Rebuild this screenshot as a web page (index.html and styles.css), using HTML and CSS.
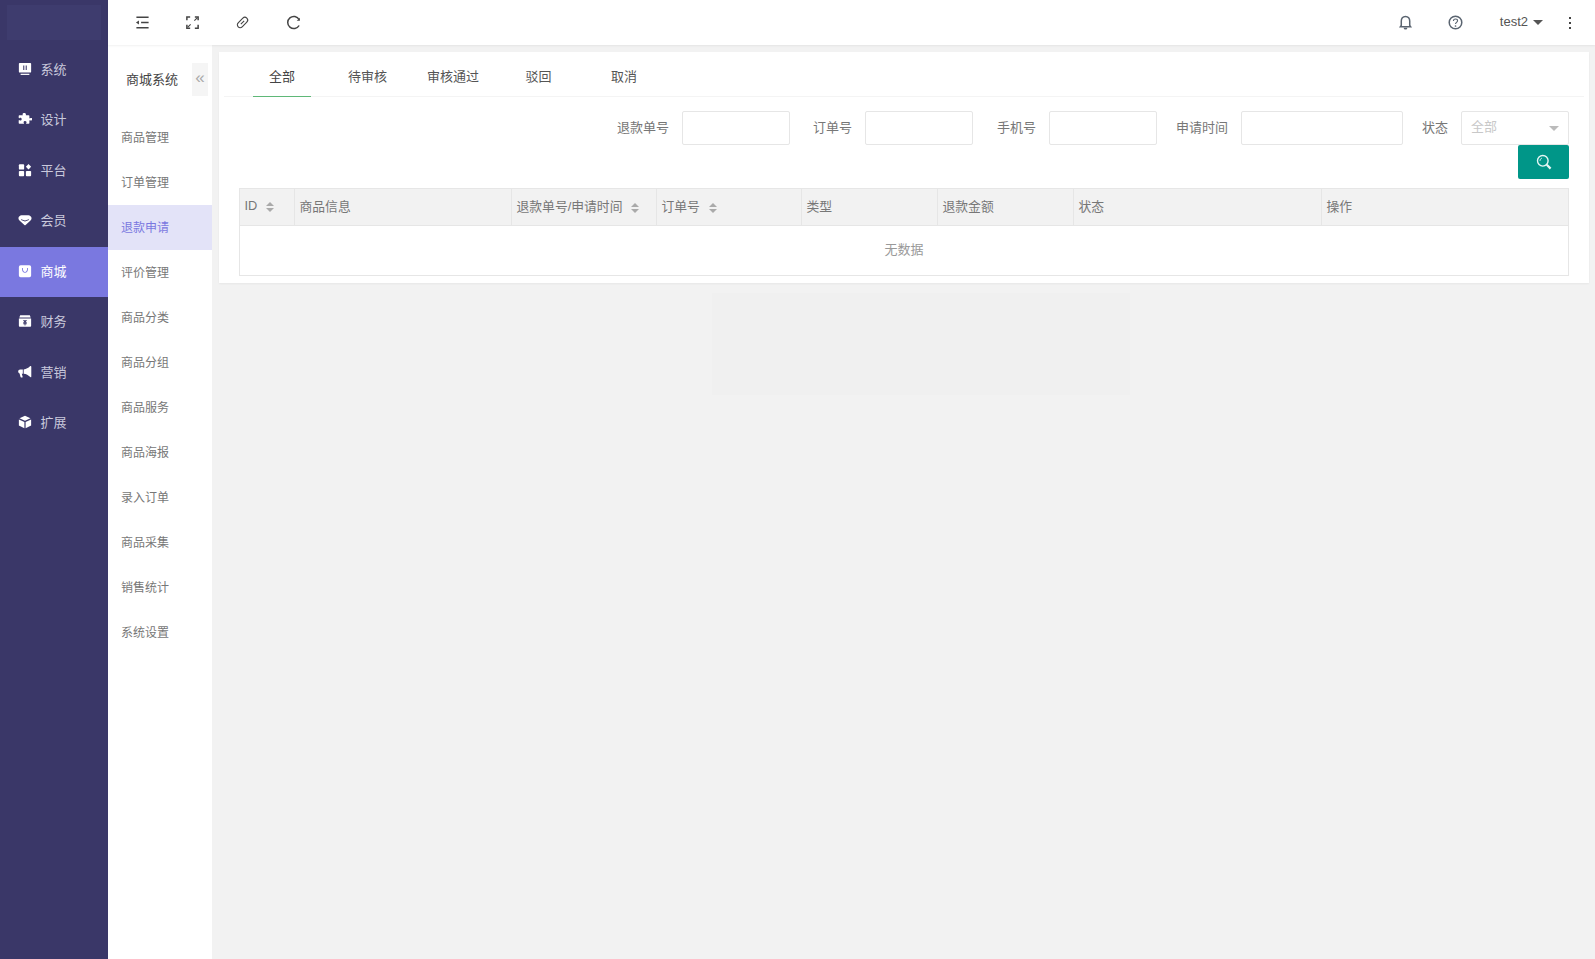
FILE: index.html
```html
<!DOCTYPE html>
<html lang="zh-CN">
  <head>
    <meta charset="UTF-8" />
    <title>退款申请</title>
    <link rel="stylesheet" href="styles.css">
  </head>
  <body>
    <div class="app">
      <aside class="sidebar">
        <div class="logo"><div class="logo-block"></div></div>
        <a class="side-item">
          <svg class="side-icon" viewBox="0 0 16 16"><path fill-rule="evenodd" d="M2 1h12a1 1 0 0 1 1 1v9a1 1 0 0 1-1 1H2a1 1 0 0 1-1-1V2a1 1 0 0 1 1-1zm4 3v5h1.200V4zm2.800 0v5H10V4z"/><rect x="3" y="13.400" width="10" height="1.400"/></svg>
          <span>系统</span>
        </a>
        <a class="side-item">
          <svg class="side-icon" viewBox="0 0 16 16"><path d="M6.400 1.200c1.600-.6 3 .5 2.600 2-.1.400 0 .6.400.6h2.800c.5 0 .8.300.8.800v2.200c0 .5.500.7.900.4 1.300-1 2.700-.2 2.400 1.300-.3 1.300-1.600 1.700-2.500 1-.4-.3-.8-.1-.8.400v2.800c0 .5-.3.800-.8.800H9.800c-.5 0-.7-.4-.4-.8.800-1.100.2-2.400-1.200-2.500-1.500-.1-2.300 1.300-1.500 2.500.3.400.1.800-.4.800H1.600c-.5 0-.8-.3-.8-.8v-3c0-.5.500-.7.900-.4 1 .8 2.500.2 2.500-1.100 0-1.400-1.500-2-2.500-1.200-.4.300-.9.100-.9-.4V4.600c0-.5.300-.8.800-.8h3.400c.5 0 .6-.3.400-.7-.4-.7-.2-1.500 1-1.900z"/></svg>
          <span>设计</span>
        </a>
        <a class="side-item">
          <svg class="side-icon" viewBox="0 0 16 16"><rect x="1" y="1.500" width="6" height="6" rx="1"/><path d="M12 1l3 3.300-3 3.200-3-3.200z"/><rect x="1" y="9" width="6" height="6" rx="1"/><rect x="9" y="9" width="6" height="6" rx="1"/></svg>
          <span>平台</span>
        </a>
        <a class="side-item">
          <svg class="side-icon" viewBox="0 0 16 16"><path fill-rule="evenodd" d="M4 2.500h8c1.500 0 3.500 1.500 3.500 3.500 0 1-.5 1.800-1.200 2.500L8.700 13.700a1 1 0 0 1-1.400 0L1.700 8.500C1 7.800.5 7 .5 6c0-2 2-3.500 3.500-3.500zM3.500 7l4.500 1.700L12.500 7v1L8 9.800 3.500 8z"/></svg>
          <span>会员</span>
        </a>
        <a class="side-item active">
          <svg class="side-icon" viewBox="0 0 16 16"><path fill-rule="evenodd" d="M3 1.500h10a2 2 0 0 1 2 2V13a2 2 0 0 1-2 2H3a2 2 0 0 1-2-2V3.500a2 2 0 0 1 2-2zM4.500 4.500C4.500 8.500 6 10 8 10s3.500-1.500 3.500-5.500h-1C10.500 7.500 9.500 9 8 9S5.500 7.500 5.500 4.500z"/></svg>
          <span>商城</span>
        </a>
        <a class="side-item">
          <svg class="side-icon" viewBox="0 0 16 16"><path fill-rule="evenodd" d="M2.500 1.500h11l1 2.500h-13zM1 5h14v8.500a1 1 0 0 1-1 1H2a1 1 0 0 1-1-1zm4.500 2L7.300 9H6v1h1.500v.7H6v1h1.500V13h1v-1.300H10v-1H8.500V10H10V9H8.700l1.800-2z"/></svg>
          <span>财务</span>
        </a>
        <a class="side-item">
          <svg class="side-icon" viewBox="0 0 16 16"><path d="M14.500 1c.4 0 .7.400.7 1v11c0 .6-.3 1-.7 1-.3 0-.5-.2-.8-.5C11.800 11.500 9.500 10.300 6.500 10V5c3-.3 5.300-1.500 7.200-3.500.3-.3.500-.5.800-.5zM5.500 5.100v4.800H4.300l1 3.600c.1.400-.1.700-.5.700H3.500c-.3 0-.5-.2-.6-.5L1.800 9.600C.8 9.300.2 8.500.2 7.500c0-1.300 1-2.400 2.300-2.400z"/></svg>
          <span>营销</span>
        </a>
        <a class="side-item">
          <svg class="side-icon" viewBox="0 0 16 16"><path d="M8 .8l6.300 3L8 6.700 1.700 3.800zM1 5l6.300 2.900v7.300L1 12zM15 5v7l-6.300 3.200V7.900z"/></svg>
          <span>扩展</span>
        </a>
      </aside>

      <div class="main">
        <header class="topbar">
          <div class="topbar-left">
            <span class="top-btn">
              <svg viewBox="0 0 16 16"><path d="M1.500 2.500h13M6.500 8h8M1.500 13.500h13" /><path class="solid" d="M1 8l3.200-2.200v4.400z"/></svg>
            </span>
            <span class="top-btn">
              <svg viewBox="0 0 16 16"><path d="M5.500 2H2v3.500M10.500 2H14v3.500M2 10.500V14h3.500M14 10.500V14h-3.500"/><path class="thin" d="M10 6l3-3M6 10l-3 3"/></svg>
            </span>
            <span class="top-btn">
              <svg viewBox="0 0 16 16"><g transform="rotate(-45 8 8)"><rect class="thin" x="1.500" y="5" width="13" height="6" rx="3"/><path class="thin" d="M5.500 8h5"/></g></svg>
            </span>
            <span class="top-btn">
              <svg viewBox="0 0 16 16"><path d="M14 4.800A6.500 6.500 0 1 0 14 11.200"/><path class="solid" d="M14.800 2.800v3.400h-3.400z"/></svg>
            </span>
          </div>
          <div class="topbar-right">
            <span class="top-btn">
              <svg viewBox="0 0 16 16"><path d="M8 1.500c-3 0-4.500 2.200-4.500 5V11L2.500 12.500h11L12.500 11V6.500c0-2.800-1.500-5-4.500-5z"/><path class="solid" d="M6 13.500h4a2 2 0 0 1-4 0z"/></svg>
            </span>
            <span class="top-btn">
              <svg viewBox="0 0 16 16"><circle cx="8" cy="8" r="6.700"/><path class="thin" d="M5.800 6.300C5.800 5 6.800 4.200 8 4.200s2.200.8 2.200 2c0 1.700-2.200 1.700-2.200 3.500"/><circle class="solid" cx="8" cy="11.700" r=".9"/></svg>
            </span>
            <span class="user-name">test2<i class="caret-down"></i></span>
            <span class="more-dots"><i></i><i></i><i></i></span>
          </div>
        </header>

        <div class="body-row">
          <nav class="submenu">
            <div class="submenu-head">
              <span class="submenu-title">商城系统</span>
              <span class="collapse-btn">«</span>
            </div>
            <a class="sub-item">商品管理</a>
            <a class="sub-item">订单管理</a>
            <a class="sub-item active">退款申请</a>
            <a class="sub-item">评价管理</a>
            <a class="sub-item">商品分类</a>
            <a class="sub-item">商品分组</a>
            <a class="sub-item">商品服务</a>
            <a class="sub-item">商品海报</a>
            <a class="sub-item">录入订单</a>
            <a class="sub-item">商品采集</a>
            <a class="sub-item">销售统计</a>
            <a class="sub-item">系统设置</a>
          </nav>

          <div class="content">
            <section class="card">
              <ul class="tabs">
                <li class="tab active">全部</li>
                <li class="tab">待审核</li>
                <li class="tab">审核通过</li>
                <li class="tab">驳回</li>
                <li class="tab">取消</li>
              </ul>

              <form class="filters">
                <div class="filter-row">
                  <label class="filter-label label-md">退款单号</label>
                  <input class="filter-input" type="text">
                  <label class="filter-label label-tight">订单号</label>
                  <input class="filter-input" type="text">
                  <label class="filter-label label-sm">手机号</label>
                  <input class="filter-input" type="text">
                  <label class="filter-label label-md">申请时间</label>
                  <input class="filter-input wide" type="text">
                  <label class="filter-label label-xs">状态</label>
                  <div class="filter-select"><span>全部</span><i class="caret-down"></i></div>
                </div>
                <button class="search-btn" type="button">
                  <svg viewBox="0 0 16 16"><circle cx="6.800" cy="6.800" r="5.300"/><path class="handle" d="M10.800 10.800l3.800 3.800"/><path class="thin" d="M4 6.800c0-1.300.8-2.300 1.800-2.700"/></svg>
                </button>
              </form>

              <div class="table-wrap">
                <table class="data-table">
                  <colgroup>
                    <col class="col-id">
                    <col class="col-info">
                    <col class="col-sort">
                    <col class="col-sort">
                    <col class="col-mid">
                    <col class="col-mid">
                    <col class="col-wide">
                    <col class="col-last">
                  </colgroup>
                  <thead>
                    <tr>
                      <th>ID<span class="sort"></span></th>
                      <th>商品信息</th>
                      <th>退款单号/申请时间<span class="sort"></span></th>
                      <th>订单号<span class="sort"></span></th>
                      <th>类型</th>
                      <th>退款金额</th>
                      <th>状态</th>
                      <th>操作</th>
                    </tr>
                  </thead>
                  <tbody>
                    <tr><td class="empty" colspan="8">无数据</td></tr>
                  </tbody>
                </table>
              </div>
            </section>
            <div class="ghost-block"></div>
          </div>
        </div>
      </div>
    </div>
  </body>
</html>
```

FILE: styles.css
```css
* {
  box-sizing: border-box;
  margin: 0;
  padding: 0;
}

body {
  background-color: #f2f2f2;
  font-family: "Liberation Sans", "Noto Sans CJK SC", sans-serif;
  font-size: 13px;
  color: #666;
  overflow: hidden;
}

ul {
  list-style: none;
}

.app {
  display: flex;
  height: 100vh;
}

/* first level menu */
.sidebar {
  width: 108px;
  flex-shrink: 0;
  background-color: #3a3768;
}

.logo {
  height: 44.500px;
  padding: 5px 7px;
}

.logo-block {
  height: 35px;
  background-color: #3e3c6e;
}

.side-item {
  display: flex;
  align-items: center;
  height: 50.500px;
  padding-left: 17.500px;
  color: #c9c9dc;
}

.side-item span {
  margin-bottom: 3px;
}

.side-item.active {
  background-color: #7a78e0;
  color: #fff;
}

.side-icon {
  width: 14px;
  height: 14px;
  margin-right: 9px;
  margin-bottom: 2px;
  fill: #fff;
}

.main {
  flex: 1;
  min-width: 0;
  display: flex;
  flex-direction: column;
}

/* top bar */
.topbar {
  display: flex;
  justify-content: space-between;
  align-items: center;
  height: 45px;
  flex-shrink: 0;
  padding: 0 24px 0 9px;
  background-color: #fff;
  box-shadow: 0 1px 2px rgba(0, 0, 0, 0.06);
  position: relative;
}

.topbar-left,
.topbar-right {
  display: flex;
  align-items: center;
}

.top-btn {
  display: flex;
  justify-content: center;
  width: 50.400px;
}

.top-btn svg {
  width: 15px;
  height: 15px;
  fill: none;
  stroke: #444;
  stroke-width: 1.600;
}

.top-btn .thin {
  stroke-width: 1.200;
}

.top-btn .solid {
  fill: #444;
  stroke: none;
}

.topbar-right .top-btn svg {
  stroke: #5a6470;
}

.topbar-right .top-btn .solid {
  fill: #5a6470;
}

.user-name {
  display: flex;
  align-items: center;
  margin-left: 19px;
  margin-top: -3px;
  color: #555;
}

.user-name .caret-down {
  margin-left: 5px;
  margin-top: 2px;
  border-top-color: #555;
}

.caret-down {
  display: inline-block;
  width: 0;
  height: 0;
  border-style: solid;
  border-width: 5px 5px 0;
  border-color: #bbb transparent transparent;
}

.more-dots {
  display: flex;
  flex-direction: column;
  gap: 3px;
  margin-left: 26px;
}

.more-dots i {
  display: block;
  width: 2px;
  height: 2px;
  background-color: #444;
}

.body-row {
  flex: 1;
  display: flex;
  min-height: 0;
}

/* second level menu */
.submenu {
  width: 104px;
  flex-shrink: 0;
  background-color: #fff;
}

.submenu-head {
  display: flex;
  align-items: flex-start;
  justify-content: space-between;
  height: 70px;
  padding: 18px 4px 0 18px;
}

.submenu-title {
  margin-top: 6px;
  color: #444;
}

.collapse-btn {
  display: flex;
  align-items: center;
  justify-content: center;
  width: 16px;
  height: 33px;
  padding-bottom: 3px;
  background-color: #f5f5f5;
  color: #aaa;
  font-size: 17px;
}

.sub-item {
  display: block;
  height: 45px;
  padding-top: 13px;
  padding-left: 13px;
  font-size: 12px;
  color: #777;
}

.sub-item.active {
  background-color: #e3e3f8;
  color: #7a78e0;
}

/* content */
.content {
  flex: 1;
  min-width: 0;
  padding: 7px 6px 0 7px;
}

.card {
  background-color: #fff;
  padding: 0 5px 7px;
  box-shadow: 0 1px 2px rgba(0, 0, 0, 0.05);
}

.tabs {
  display: flex;
  gap: 27.500px;
  height: 45px;
  padding-left: 29px;
  border-bottom: 1px solid #f4f4f4;
}

.tab {
  display: flex;
  justify-content: center;
  align-items: center;
  width: 58px;
  padding-top: 2px;
  color: #555;
}

.tab.active {
  border-bottom: 1px solid #5fb878;
  margin-bottom: -1px;
  color: #444;
}

.filters {
  display: flex;
  flex-direction: column;
  align-items: flex-end;
  padding: 14px 15px 0 0;
}

.filter-row {
  display: flex;
  align-items: center;
}

.filter-label {
  padding-right: 13px;
  padding-bottom: 4px;
  text-align: right;
  color: #777;
}

.label-md {
  width: 84px;
}

.label-sm {
  width: 76px;
}

.label-tight {
  width: 75px;
}

.label-xs {
  width: 58px;
}

.filter-input {
  width: 108px;
  height: 34px;
  border: 1px solid #e6e6e6;
  border-radius: 2px;
  background-color: #fff;
}

.filter-input.wide {
  width: 162px;
}

.filter-select {
  display: flex;
  justify-content: space-between;
  align-items: center;
  width: 108px;
  height: 34px;
  padding: 0 9px;
  border: 1px solid #e6e6e6;
  border-radius: 2px;
  color: #c8c8c8;
}

.filter-select span {
  margin-bottom: 5px;
}

.search-btn {
  display: flex;
  justify-content: center;
  align-items: center;
  width: 51px;
  height: 34px;
  border: none;
  border-radius: 2px;
  background-color: #009688;
}

.search-btn svg {
  width: 16px;
  height: 16px;
  fill: none;
  stroke: #e6f7f5;
  stroke-width: 1.400;
}

.search-btn .handle {
  stroke-width: 2.200;
}

.search-btn .thin {
  stroke-width: 1;
}

.table-wrap {
  margin: 9px 16px 0 15px;
}

.data-table {
  width: 100%;
  table-layout: fixed;
  border-collapse: collapse;
  border: 1px solid #e6e6e6;
}

.col-id {
  width: 55px;
}

.col-info {
  width: 217px;
}

.col-sort {
  width: 145px;
}

.col-mid {
  width: 136px;
}

.col-wide {
  width: 248px;
}

.col-last {
  width: 247px;
}

.data-table th {
  height: 37px;
  padding: 0 0 4px 4.500px;
  background-color: #f2f2f2;
  border-right: 1px solid #e6e6e6;
  border-bottom: 1px solid #e6e6e6;
  font-size: 12.800px;
  font-weight: normal;
  text-align: left;
  color: #777;
}

.sort {
  display: inline-block;
  position: relative;
  width: 9px;
  height: 10px;
  margin-left: 9px;
  vertical-align: -2px;
}

.sort::before,
.sort::after {
  content: "";
  position: absolute;
  left: 0;
  border-style: solid;
  border-color: transparent;
}

.sort::before {
  top: 0;
  border-width: 0 4.500px 4.600px;
  border-bottom-color: #aaa;
}

.sort::after {
  bottom: 0;
  border-width: 4.600px 4.500px 0;
  border-top-color: #aaa;
}

.empty {
  height: 50px;
  padding-bottom: 5px;
  text-align: center;
  color: #999;
}

/* faint block under the card */
.ghost-block {
  width: 418px;
  height: 102px;
  margin: 10px 0 0 493px;
  background-color: #f0f0f0;
}
```
